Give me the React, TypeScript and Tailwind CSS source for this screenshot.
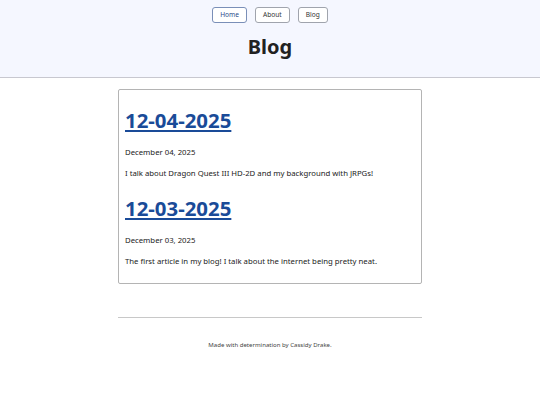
import React from "react";

const posts = [
  {
    title: "12-04-2025",
    date: "December 04, 2025",
    text: "I talk about Dragon Quest III HD-2D and my background with JRPGs!",
  },
  {
    title: "12-03-2025",
    date: "December 03, 2025",
    text: "The first article in my blog! I talk about the internet being pretty neat.",
  },
];

export default function App() {
  return (
    <div
      className="min-h-[405px] bg-white text-[#222]"
      style={{ fontFamily: '"Noto Sans", sans-serif' }}
    >
      <header className="h-[78px] bg-[#f5f7ff] border-b border-[#c8c8d0] flex flex-col items-center pt-[7px]">
        <nav className="flex gap-[8px]">
          {["Home", "About", "Blog"].map((n, i) => (
            <a
              key={n}
              className={`h-[16px] px-[7px] flex items-center rounded-[3px] border bg-white text-[6.6px] leading-none ${
                i === 0 ? "border-[#7a8fb8] text-[#2a4a8a]" : "border-[#a0a4ad] text-[#333333]"
              }`}
            >
              {n}
            </a>
          ))}
        </nav>
        <h1 className="mt-[10px] text-[20px] leading-[27px] font-bold text-[#222]">Blog</h1>
      </header>
      <main className="w-[304px] mx-auto mt-[11px]">
        <div className="border border-[#b4b4b4] rounded-[2px] px-[6px] pt-[17px] pb-[16px]">
          {posts.map((p, i) => (
            <div key={p.title} className={i > 0 ? "mt-[16px]" : ""}>
              <h2 className="text-[20.4px] leading-[27px] font-bold">
                <a className="text-[#1a4b98] underline decoration-[1.5px] underline-offset-[2px]">{p.title}</a>
              </h2>
              <p className="mt-[12px] text-[7.75px] leading-[12px] text-[#222]">{p.date}</p>
              <p className="mt-[9px] text-[7.75px] leading-[12px] text-[#222]">{p.text}</p>
            </div>
          ))}
        </div>
      </main>
      <footer className="w-[304px] mx-auto mt-[33px] border-t border-[#c8c8c8] pt-[22px] text-center">
        <p className="text-[6.05px] leading-[10px] text-[#444]">Made with determination by Cassidy Drake.</p>
      </footer>
    </div>
  );
}
